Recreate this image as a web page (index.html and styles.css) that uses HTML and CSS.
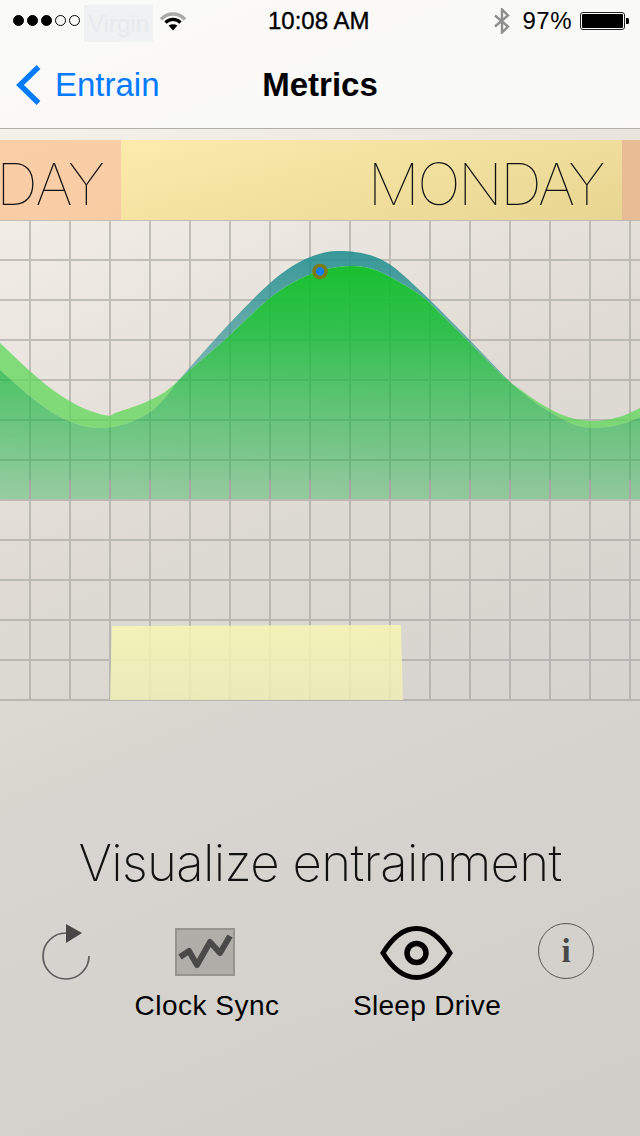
FILE: index.html
```html
<!DOCTYPE html>
<html lang="en">
<head>
<meta charset="utf-8">
<title>Metrics</title>
<link rel="stylesheet" href="styles.css">
</head>
<body>
<div class="screen">
  <header class="topbar">
    <div class="status">
      <div class="dots">
        <span class="dot on"></span><span class="dot on"></span><span class="dot on"></span><span class="dot"></span><span class="dot"></span>
      </div>
      <span class="carrier">Virgin</span>
      <svg class="wifi" width="26" height="20" viewBox="0 0 26 20">
        <path d="M1 8.4A16 16 0 0 1 25 8.4" fill="none" stroke="#a9a9a9" stroke-width="3.4"/>
        <path d="M5.5 11.6A10.5 10.5 0 0 1 20.5 11.6" fill="none" stroke="#000" stroke-width="3.2"/>
        <path d="M13 19.5L8.6 14.6Q13 11.8 17.4 14.6Z" fill="#000"/>
      </svg>
      <span class="time">10:08 AM</span>
      <div class="status-right">
        <svg class="bt" width="16" height="26" viewBox="0 0 16 26">
          <path d="M1 7.5L14 18.5L8 24.5V1.5L14 7.5L1 18.5" fill="none" stroke="#8e8e8e" stroke-width="2.4"/>
        </svg>
        <span class="pct">97%</span>
        <svg class="battery" width="49" height="18" viewBox="0 0 49 18">
          <rect x="0.5" y="0.5" width="44" height="17" rx="2.5" fill="#fff" stroke="#222"/>
          <rect x="2" y="2" width="41" height="14" rx="1" fill="#000"/>
          <path d="M46 6h1.500q1.500 0 1.500 1.500v3q0 1.500-1.500 1.500H46z" fill="#000"/>
        </svg>
      </div>
    </div>
    <nav class="nav">
      <div class="back">
        <svg class="chev" width="26" height="42" viewBox="0 0 26 42">
          <path d="M23.500 3L5 21L23.500 39" fill="none" stroke="#007aff" stroke-width="5.400"/>
        </svg>
        <span class="back-text">Entrain</span>
      </div>
      <h1 class="nav-title">Metrics</h1>
      <div></div>
    </nav>
  </header>

  <section class="band">
    <div class="seg seg-left"><span class="day day-left">DAY</span></div>
    <div class="seg seg-mid"><span class="day">MONDAY</span></div>
    <div class="seg seg-right"></div>
  </section>

  <svg class="chart" width="640" height="481" viewBox="0 220 640 481">
    <defs>
      <pattern id="grid" x="10" y="200" width="40" height="40" patternUnits="userSpaceOnUse">
        <path d="M19 0h2v40h-2zM0 19h40v2H0z" fill="#a3a19e" fill-opacity=".6"/>
      </pattern>
      <pattern id="ticks" x="10" y="200" width="40" height="40" patternUnits="userSpaceOnUse">
        <path d="M19 0h2v40h-2z" fill="#a8a7a4"/>
      </pattern>
      <linearGradient id="mainGreen" gradientUnits="userSpaceOnUse" x1="0" y1="262" x2="0" y2="500">
        <stop offset="0" stop-color="#12bf2a" stop-opacity=".98"/>
        <stop offset=".3" stop-color="#1abc3c" stop-opacity=".88"/>
        <stop offset="1" stop-color="#26b050" stop-opacity=".4"/>
      </linearGradient>
      <linearGradient id="teal" gradientUnits="userSpaceOnUse" x1="0" y1="250" x2="0" y2="385">
        <stop offset="0" stop-color="#1e8e8e" stop-opacity=".88"/>
        <stop offset="1" stop-color="#2f9096" stop-opacity=".55"/>
      </linearGradient>
      <linearGradient id="sticky" gradientUnits="userSpaceOnUse" x1="0" y1="625" x2="0" y2="700">
        <stop offset="0" stop-color="#f8f7b2"/>
        <stop offset="1" stop-color="#efeeb4"/>
      </linearGradient>
    </defs>
    <rect x="0" y="220" width="640" height="481" fill="url(#grid)"/>
    <path d="M177 382C205 350 240 310 270 283C290 265 315 251 338 251C360 251 378 255 395 268C425 293 470 340 510 382C497 371 484 357 470 343C458 331 445 318 430 303C418 292 405 285 390 277C378 270 367 266 352 266C320 266 290 282 270 298C258 308 245 320 230 335C212 352 195 364 177 382Z" fill="url(#teal)"/>
    <path d="M0 343C25 366 65 410 110 416L115 413C130 408 150 402 165 392L177 382C170 391 163 402 153 410C138 421 118 428 100 428C60 428 25 392 0 370Z" fill="#5cd655" fill-opacity=".74"/>
    <path d="M510 382C535 400 560 421 593 421C610 421 625 416 640 408V417C625 424 610 428 593 428C578 428 565 421 550 412C536 404 524 394 510 382Z" fill="#5cd655" fill-opacity=".74"/>
    <path d="M0 370C25 392 60 428 100 428C118 428 138 421 153 410C163 402 170 391 177 382C195 364 212 352 230 335C245 320 258 308 270 298C290 282 320 266 352 266C367 266 378 270 390 277C405 285 418 292 430 303C445 318 458 331 470 343C484 357 497 371 510 382C524 394 536 404 550 412C565 421 578 428 593 428C610 428 625 424 640 417V500H0Z" fill="url(#mainGreen)"/>
    <rect x="0" y="480" width="640" height="19" fill="url(#ticks)"/>
    <rect x="0" y="499" width="640" height="2" fill="#bcbab6"/>
    <circle cx="320" cy="271.500" r="6" fill="#0a80f2" stroke="#7f7a10" stroke-width="3.600"/>
    <path d="M112 626L400 625Q401 625 401 626L403 700H110Z" fill="url(#sticky)" fill-opacity=".82"/>
  </svg>

  <section class="lower">
    <h2 class="headline">Visualize entrainment</h2>
    <div class="controls">
      <svg class="reload" width="50" height="58" viewBox="0 0 50 58">
        <path d="M24 10A23 23 0 1 0 47 33" fill="none" stroke="#5c5c5c" stroke-width="1.700"/>
        <path d="M24 1L40 10L24 20Z" fill="#474747"/>
      </svg>
      <div class="tool tool-sync">
        <svg class="tool-icon" width="60" height="48" viewBox="0 0 60 48">
          <rect x="1" y="1" width="58" height="46" fill="#b0aea8" stroke="#959490" stroke-width="2"/>
          <path d="M5 29L14 23L22 37L35 14L45 25L55 8" fill="none" stroke="#4a4a4a" stroke-width="6" stroke-linejoin="round"/>
        </svg>
        <span class="tool-label">Clock Sync</span>
      </div>
      <div class="tool tool-sleep">
        <svg class="tool-icon" width="74" height="54" viewBox="0 0 74 54">
          <path d="M3 27C14 9 25 2.500 36.500 2.500C48 2.500 59 9 70 27C59 45 48 51.500 36.500 51.500C25 51.500 14 45 3 27Z" fill="none" stroke="#000" stroke-width="5"/>
          <circle cx="36.500" cy="27" r="9.500" fill="none" stroke="#000" stroke-width="5.500"/>
        </svg>
        <span class="tool-label">Sleep Drive</span>
      </div>
      <div class="info"><span class="info-i">i</span></div>
    </div>
  </section>
</div>
</body>
</html>
```
FILE: styles.css
```css
* { box-sizing: border-box; }
html, body { margin: 0; padding: 0; }
body { width: 640px; height: 1136px; overflow: hidden; font-family: "Liberation Sans", Arial, sans-serif; color: #000; }
.screen {
  width: 640px;
  height: 1136px;
  display: flex;
  flex-direction: column;
  background: linear-gradient(158deg, #f9f7f1 0%, #f0ece5 18%, #dfdbd4 42%, #d8d5d0 62%, #d0cec9 100%);
}
.topbar { height: 129px; background: rgba(250, 250, 249, .93); border-bottom: 1px solid #b1afab; }

.status { height: 40px; display: flex; align-items: center; padding-left: 13px; padding-right: 11px; padding-top: 1px; }
.dots { display: flex; gap: 3px; }
.dot { width: 11px; height: 11px; border-radius: 50%; border: 1px solid #000; }
.dot.on { background: #000; }
.carrier {
  margin-left: 4px;
  align-self: flex-start;
  margin-top: 4px;
  width: 69px;
  height: 37px;
  background: #eff1f3;
  color: #e6eaee;
  font-size: 24px;
  line-height: 37px;
  text-align: center;
}
.wifi { margin-left: 7px; }
.time { margin-left: 82px; font-size: 24px; -webkit-text-stroke: .35px #000; }
.status-right { margin-left: auto; display: flex; align-items: center; }
.pct { margin-left: 12px; font-size: 24px; letter-spacing: .5px; }
.battery { margin-left: 8px; }

.nav { height: 88px; display: grid; grid-template-columns: 1fr auto 1fr; align-items: center; padding-top: 2px; }
.back { display: flex; align-items: center; padding-left: 15px; color: #007aff; }
.back-text { margin-left: 14px; font-size: 33px; }
.nav-title { margin: 0; font-size: 33px; font-weight: 700; }

.band { margin-top: 11px; height: 80px; display: flex; }
.seg { height: 80px; display: flex; justify-content: flex-end; overflow: hidden; }
.seg-left { width: 121px; padding-right: 17px; background: linear-gradient(160deg, #facfa8, #f8cba3); }
.seg-mid { width: 501px; padding-right: 19px; background: linear-gradient(165deg, #fcebab, #e8d592); }
.seg-right { width: 18px; background: #e8bc94; }
.day { font-family: Inter, "Liberation Sans", sans-serif; font-weight: 100; font-size: 58px; line-height: 88px; letter-spacing: -2.5px; white-space: nowrap; color: #111; }
.day-left { letter-spacing: -.8px; }

.chart { display: block; flex: none; }

.lower { flex: 1; }
.headline { margin: 127px 0 0; text-align: center; font-family: Inter, "Liberation Sans", sans-serif; font-weight: 200; font-size: 51px; line-height: 70px; letter-spacing: -.7px; color: #111; }
.controls { display: flex; align-items: flex-start; margin-top: 25px; padding-left: 42px; }
.reload { flex: none; }
.tool { display: flex; flex-direction: column; align-items: center; }
.tool-sync { width: 146px; margin-left: 42px; padding-top: 5px; }
.tool-sync .tool-icon { margin-right: 4px; }
.tool-sleep { width: 148px; margin-left: 73px; padding-top: 3px; }
.tool-sleep .tool-icon { margin-right: 20px; }
.tool-label { font-size: 28px; line-height: 32px; letter-spacing: .3px; white-space: nowrap; }
.tool-sync .tool-label { margin-top: 14px; letter-spacing: .5px; }
.tool-sleep .tool-label { margin-top: 10px; }
.info { width: 56px; height: 56px; margin-left: 37px; border: 1.6px solid #555; border-radius: 50%; display: flex; align-items: center; justify-content: center; }
.info-i { font-family: "Liberation Serif", serif; font-weight: 700; font-size: 33px; line-height: 1; color: #484848; }
```
